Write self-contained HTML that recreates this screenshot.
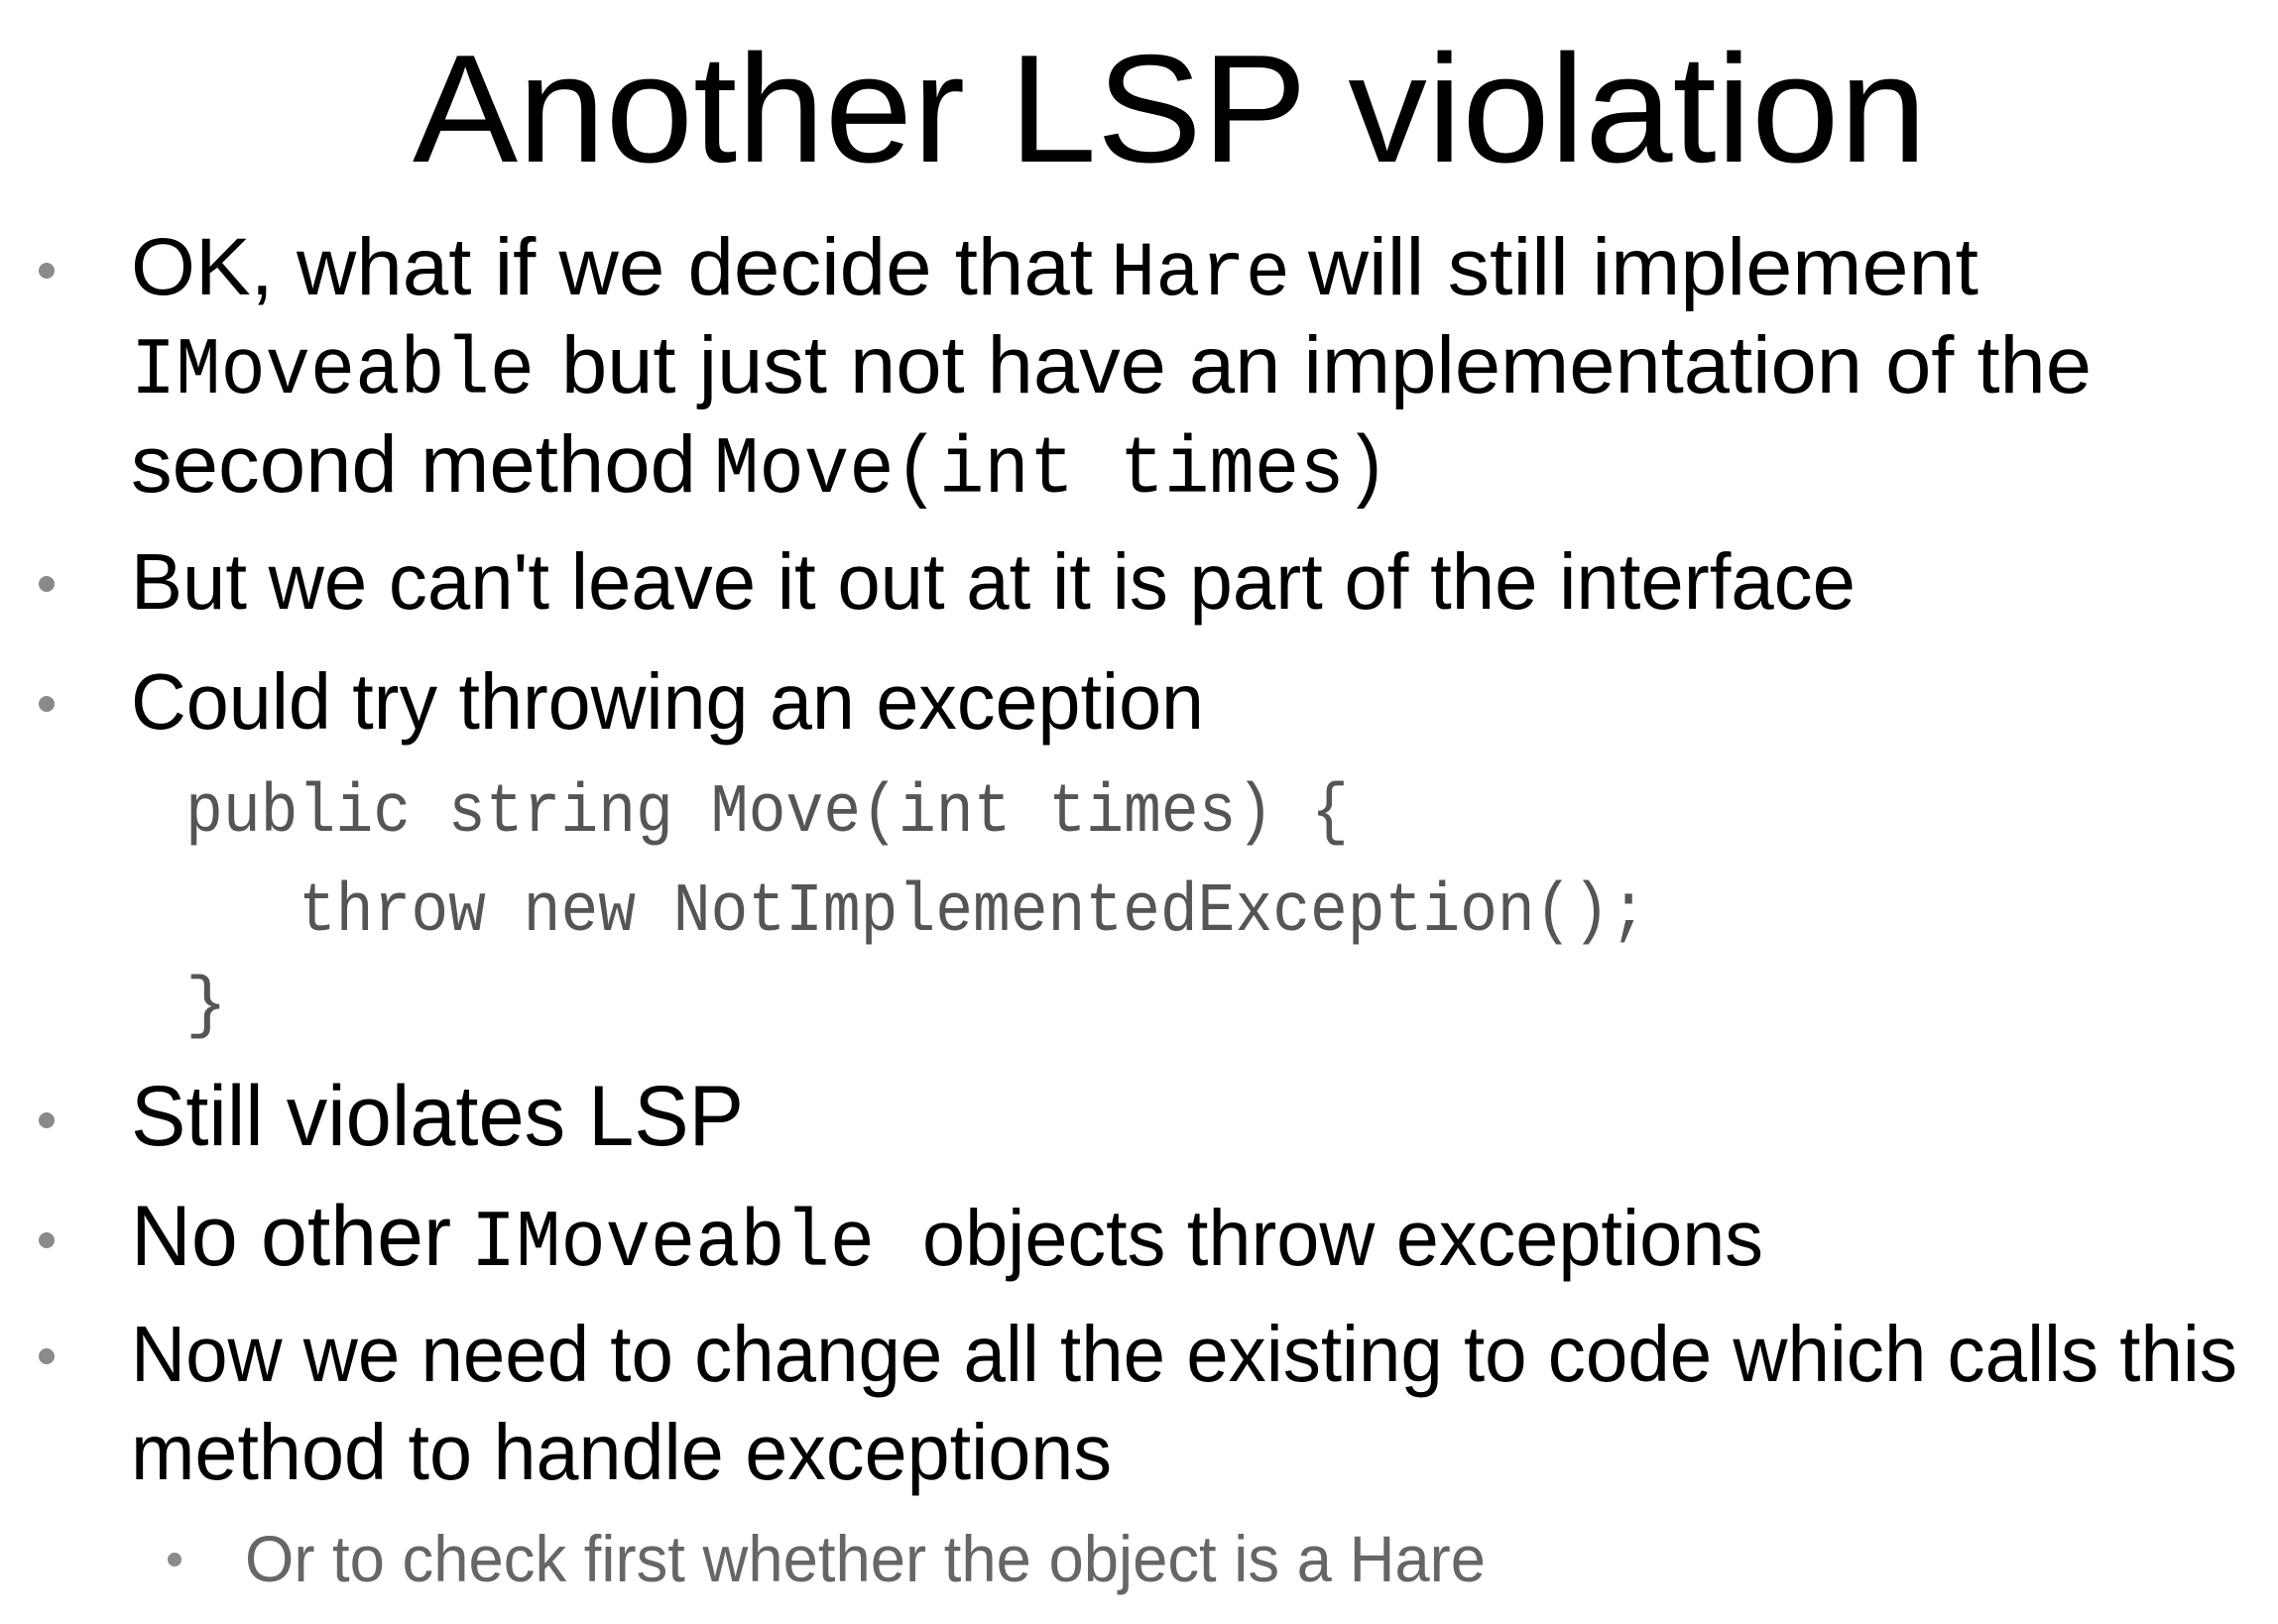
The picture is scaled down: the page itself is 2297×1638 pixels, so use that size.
<!DOCTYPE html>
<html><head><meta charset="utf-8"><style>
html,body{margin:0;padding:0;background:#fff;}
svg{display:block;}
.s{font-family:"Liberation Sans",Arial,sans-serif;fill:#000;}
.m{font-family:"Liberation Mono","DejaVu Sans Mono",monospace;fill:#000;}
.c{font-family:"Liberation Mono","DejaVu Sans Mono",monospace;fill:#555;}
</style></head><body>
<svg width="2297" height="1638" viewBox="0 0 2297 1638" xmlns="http://www.w3.org/2000/svg">
<rect width="2297" height="1638" fill="#fff"/>
<text class="s" x="416" y="163" font-size="155" textLength="1527" lengthAdjust="spacingAndGlyphs">Another LSP violation</text>
<g fill="#8a8a8a">
<circle cx="47" cy="273" r="8"/>
<circle cx="47" cy="589" r="8"/>
<circle cx="47" cy="710" r="8"/>
<circle cx="47" cy="1130" r="8"/>
<circle cx="47" cy="1251" r="8"/>
<circle cx="47" cy="1368" r="8"/>
<circle cx="176" cy="1573" r="7"/>
</g>
<text class="s" x="132" y="297" font-size="82" textLength="970" lengthAdjust="spacingAndGlyphs">OK, what if we decide that</text>
<text class="m" x="1120" y="297" font-size="78" textLength="181" lengthAdjust="spacingAndGlyphs">Hare</text>
<text class="s" x="1319" y="297" font-size="82" textLength="676" lengthAdjust="spacingAndGlyphs">will still implement</text>
<text class="m" x="132" y="396" font-size="82" textLength="407" lengthAdjust="spacingAndGlyphs">IMoveable</text>
<text class="s" x="566" y="396" font-size="82" textLength="1543" lengthAdjust="spacingAndGlyphs">but just not have an implementation of the</text>
<text class="s" x="132" y="496" font-size="82" textLength="570" lengthAdjust="spacingAndGlyphs">second method</text>
<text class="m" x="720" y="496" font-size="82" textLength="681" lengthAdjust="spacingAndGlyphs">Move(int times)</text>
<text class="s" x="132" y="614" font-size="80" textLength="1739" lengthAdjust="spacingAndGlyphs">But we can't leave it out at it is part of the interface</text>
<text class="s" x="132" y="735" font-size="80" textLength="1082" lengthAdjust="spacingAndGlyphs">Could try throwing an exception</text>
<text class="c" x="187" y="838" font-size="70" textLength="1173" lengthAdjust="spacingAndGlyphs">public string Move(int times) {</text>
<text class="c" x="301" y="938" font-size="70" textLength="1360" lengthAdjust="spacingAndGlyphs">throw new NotImplementedException();</text>
<text class="c" x="187" y="1033" font-size="70">}</text>
<text class="s" x="132" y="1155" font-size="86" textLength="618" lengthAdjust="spacingAndGlyphs">Still violates LSP</text>
<text class="s" x="132" y="1276" font-size="86" textLength="323" lengthAdjust="spacingAndGlyphs">No other</text>
<text class="m" x="475" y="1276" font-size="82" textLength="407" lengthAdjust="spacingAndGlyphs">IMoveable</text>
<text class="s" x="930" y="1276" font-size="80" textLength="848" lengthAdjust="spacingAndGlyphs">objects throw exceptions</text>
<text class="s" x="132" y="1393" font-size="80" textLength="2124" lengthAdjust="spacingAndGlyphs">Now we need to change all the existing to code which calls this</text>
<text class="s" x="132" y="1492" font-size="80" textLength="989" lengthAdjust="spacingAndGlyphs">method to handle exceptions</text>
<text class="s" x="247" y="1595" font-size="66" style="fill:#666" textLength="1251" lengthAdjust="spacingAndGlyphs">Or to check first whether the object is a Hare</text>
</svg>
</body></html>
